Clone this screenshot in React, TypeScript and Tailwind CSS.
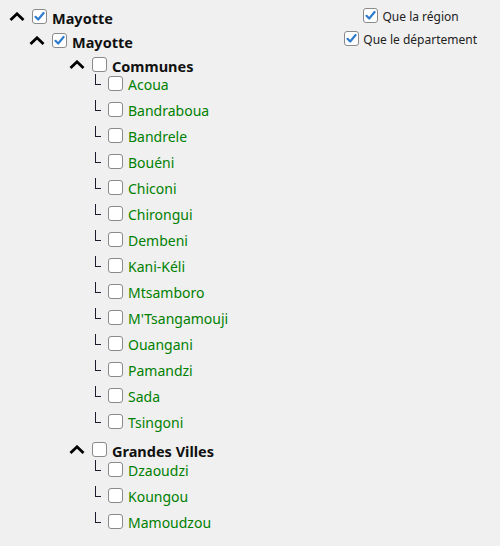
import React from "react";

const communes = [
  "Acoua",
  "Bandraboua",
  "Bandrele",
  "Bouéni",
  "Chiconi",
  "Chirongui",
  "Dembeni",
  "Kani-Kéli",
  "Mtsamboro",
  "M'Tsangamouji",
  "Ouangani",
  "Pamandzi",
  "Sada",
  "Tsingoni",
];

const villes = ["Dzaoudzi", "Koungou", "Mamoudzou"];

function Box({ checked = false }: { checked?: boolean }) {
  return (
    <span className="flex h-[15px] w-[15px] shrink-0 items-center justify-center rounded-[3px] border border-[#8a8a8a] bg-white">
      {checked && (
        <svg width="11" height="11" viewBox="0 0 11 11">
          <polyline
            points="1.5,5.8 4.2,8.5 9.6,2"
            fill="none"
            stroke="#2f7ccc"
            strokeWidth="2.2"
            strokeLinecap="round"
            strokeLinejoin="round"
          />
        </svg>
      )}
    </span>
  );
}

function Chevron() {
  return (
    <svg width="16" height="9" viewBox="0 0 16 9" className="shrink-0">
      <polyline
        points="1.5,8 8,1.8 14.5,8"
        fill="none"
        stroke="#000"
        strokeWidth="2.8"
      />
    </svg>
  );
}

function Header({ label, checked, indent }: { label: string; checked?: boolean; indent: string }) {
  return (
    <div className={`flex h-6 items-center ${indent}`}>
      <Chevron />
      <span className="ml-[7px]">
        <Box checked={checked} />
      </span>
      <span className="ml-[5px] pt-[5px] text-[14.5px] font-bold text-[#111]">{label}</span>
    </div>
  );
}

function Leaf({ label }: { label: string }) {
  return (
    <li className="flex h-[26px] items-center pl-[95px]">
      <span className="mb-[8px] h-[11px] w-[6px] shrink-0 border-b-[1.5px] border-l-[1.5px] border-[#1c1c2c]" />
      <span className="ml-[7px]">
        <Box />
      </span>
      <span className="ml-[5px] pt-[4px] text-[14px] text-[#008000]">{label}</span>
    </li>
  );
}

export default function App() {
  return (
    <div
      className="flex min-h-[546px] w-[500px] bg-[#f0f0f0] pt-[4px] leading-none"
      style={{ fontFamily: '"Segoe UI", "Noto Sans", sans-serif' }}
    >
      <div className="flex-1">
        <Header label="Mayotte" checked indent="pl-[9px]" />
        <Header label="Mayotte" checked indent="pl-[29px]" />
        <Header label="Communes" indent="pl-[69px]" />
        <ul className="-mt-[6px]">
          {communes.map((c) => (
            <Leaf key={c} label={c} />
          ))}
        </ul>
        <div className="mt-[3px]">
          <Header label="Grandes Villes" indent="pl-[69px]" />
        </div>
        <ul className="-mt-[5px]">
          {villes.map((v) => (
            <Leaf key={v} label={v} />
          ))}
        </ul>
      </div>
      <div className="mr-[23px] flex flex-col items-center text-[12px] text-[#222]">
        <label className="flex h-[23px] items-center gap-[5px]">
          <Box checked />
          <span className="pt-[3px]">Que la région</span>
        </label>
        <label className="flex h-[23px] items-center gap-[4px]">
          <Box checked />
          <span className="pt-[3px]">Que le département</span>
        </label>
      </div>
    </div>
  );
}
